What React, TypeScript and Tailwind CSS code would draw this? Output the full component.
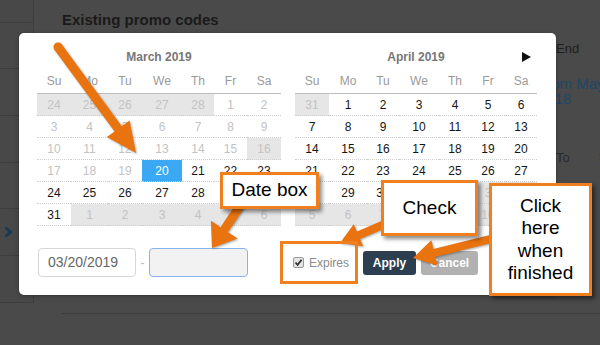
const FONT = { fontFamily: '"Liberation Sans", Arial, sans-serif' };

type Cell = [string, "o" | "d" | "n" | "s"];

// "24o 25o 1d" -> [["24","o"],["25","o"],["1","d"]]
const row = (s: string): Cell[] =>
  s.split(" ").map((t) => [t.slice(0, -1), t.slice(-1) as Cell[1]]);

const MARCH: Cell[][] = [
  row("24o 25o 26o 27o 28o 1d 2d"),
  row("3d 4d 5d 6d 7d 8d 9d"),
  row("10d 11d 12d 13d 14d 15d 16o"),
  row("17d 18d 19d 20s 21n 22n 23n"),
  row("24n 25n 26n 27n 28n 29n 30n"),
  row("31n 1o 2o 3o 4o 5o 6o"),
];

const APRIL: Cell[][] = [
  row("31o 1n 2n 3n 4n 5n 6n"),
  row("7n 8n 9n 10n 11n 12n 13n"),
  row("14n 15n 16n 17n 18n 19n 20n"),
  row("21n 22n 23n 24n 25n 26n 27n"),
  row("28n 29n 30n 1o 2o 3o 4o"),
  row("5o 6o 7o 8o 9o 10o 11o"),
];

const DAYS = ["Su", "Mo", "Tu", "We", "Th", "Fr", "Sa"];

const cellColors: Record<string, string> = {
  o: "bg-[#e6e6e6] text-[#c3c3c3]",
  d: "text-[#c3c3c3]",
  n: "text-[#151515]",
  s: "bg-[#3aa8f3] text-white",
};

function Calendar({ title, cols, rows, next }: { title: string; cols: string; rows: Cell[][]; next?: boolean }) {
  return (
    <div className="flex flex-col">
      <div className="grid grid-cols-[34px_1fr_34px] h-[24px] items-center">
        <span />
        <span className="text-center text-[12px] font-bold text-[#777]">{title}</span>
        <span className="flex justify-end pr-[6px]">
          {next && (
            <svg width="9" height="10" viewBox="0 0 9 10">
              <path d="M0 0 L9 5 L0 10 Z" fill="#111" />
            </svg>
          )}
        </span>
      </div>
      <div className={`grid ${cols} h-[25px] items-center border-b border-[#bdbdbd] text-[12px] text-[#9a9a9a]`}>
        {DAYS.map((d) => (
          <span key={d} className="text-center">{d}</span>
        ))}
      </div>
      {rows.map((r, i) => (
        <div key={i} className={`grid ${cols}`}>
          {r.map(([n, t], j) => (
            <div
              key={j}
              className={`h-[22px] flex items-center justify-center text-[12px] border-b border-dotted border-[#cfcfcf] ${cellColors[t]}`}
            >
              {n}
            </div>
          ))}
        </div>
      ))}
    </div>
  );
}

function arrow(x1: number, y1: number, x2: number, y2: number, shaft: number, headL: number, headW: number) {
  const len = Math.hypot(x2 - x1, y2 - y1);
  const ux = (x2 - x1) / len;
  const uy = (y2 - y1) / len;
  const nx = -uy;
  const ny = ux;
  const bx = x2 - ux * headL;
  const by = y2 - uy * headL;
  const p = (x: number, y: number) => `${x.toFixed(1)},${y.toFixed(1)}`;
  return [
    p(x1 + (nx * shaft) / 2, y1 + (ny * shaft) / 2),
    p(bx + (nx * shaft) / 2, by + (ny * shaft) / 2),
    p(bx + (nx * headW) / 2, by + (ny * headW) / 2),
    p(x2, y2),
    p(bx - (nx * headW) / 2, by - (ny * headW) / 2),
    p(bx - (nx * shaft) / 2, by - (ny * shaft) / 2),
    p(x1 - (nx * shaft) / 2, y1 - (ny * shaft) / 2),
  ].join(" ");
}

export default function App() {
  return (
    <div className="relative w-[600px] h-[345px] overflow-hidden bg-[#4a4a4a] flex" style={FONT}>
      {/* dimmed page behind the dialog */}
      <div className="w-[34px] flex flex-col border-r border-[#3e3e3e] self-start bg-[#484848]">
        <div className="h-[23px] border-b border-[#3e3e3e]" />
        <div className="h-[46px] border-b border-[#3e3e3e]" />
        <div className="h-[47px] border-b border-[#3e3e3e]" />
        <div className="h-[47px] border-b border-[#3e3e3e]" />
        <div className="h-[46px] border-b border-[#3e3e3e]" />
        <div className="h-[47px] border-b border-[#3e3e3e] flex items-center pl-[4px]">
          <svg width="9" height="12" viewBox="0 0 9 12">
            <path d="M1.5 1.5 L6.5 6 L1.5 10.5" fill="none" stroke="#163b57" strokeWidth="3" />
          </svg>
        </div>
        <div className="h-[47px] border-b border-[#3e3e3e]" />
      </div>
      <div className="flex-1 flex flex-col pl-[28px]">
        <div className="pt-[11px] h-[29px] leading-[18px] text-[15px] font-bold text-[#1a1a1a]">Existing promo codes</div>
        <div className="flex">
          <div className="flex-1" />
          <div className="w-[62px] flex flex-col whitespace-nowrap">
            <div className="mt-[12px] pl-[18px] h-[16px] leading-[16px] text-[13px] text-[#1e1e1e]">End</div>
            <div className="mt-[19px] pl-[4px] leading-[15px] text-[15px] text-[#1d4866]">from May</div>
            <div className="leading-[15px] text-[15px] text-[#1d4866]">2018</div>
            <div className="mt-[44px] pl-[18px] leading-[16px] text-[13px] text-[#2a2a2a] flex">
              <span>To</span>
              <span className="ml-[29px]">S</span>
            </div>
          </div>
        </div>
        <div className="mt-auto mb-[31px] border-t border-[#3b3b3b]" />
      </div>

      {/* date range dialog */}
      <div className="absolute left-[19px] top-[33px] w-[537px] bg-white rounded-[5px] pt-[12px] pb-[18px] pl-[18px] pr-[19px] shadow-[0_1px_4px_rgba(0,0,0,0.3)]">
        <div className="flex gap-[14px]">
          <div className="w-[244px]">
            <Calendar title="March 2019" cols="grid-cols-[34px_37px_34px_40px_32px_33px_34px]" rows={MARCH} />
          </div>
          <div className="w-[242px]">
            <Calendar title="April 2019" cols="grid-cols-[34px_38px_32px_40px_32px_34px_32px]" rows={APRIL} next />
          </div>
        </div>
        <div className="flex items-center mt-[22px] pl-[1px]">
          <div className="w-[98px] h-[29px] border border-[#d6d6d6] rounded-[4px] flex items-center pl-[9px] text-[14px] text-[#666]">
            03/20/2019
          </div>
          <span className="w-[13px] text-center text-[12px] text-[#bbb]">-</span>
          <div className="w-[99px] h-[29px] border border-[#86b3ee] rounded-[4px] bg-[#f2f2f2]" />
          <span className="ml-[45px] w-[11px] h-[11px] rounded-[2px] border border-[#9a9a9a] bg-[#e4e4e4] flex items-center justify-center">
            <svg width="9" height="9" viewBox="0 0 9 9">
              <path d="M1.5 4.5 L3.6 6.8 L7.6 1.8" fill="none" stroke="#333" strokeWidth="1.8" />
            </svg>
          </span>
          <span className="ml-[5px] text-[12px] text-[#8a8a8a]">Expires</span>
          <button className="ml-[14px] w-[53px] h-[24px] rounded-[3px] bg-[#2c3e50] text-white text-[12px] font-bold">Apply</button>
          <button className="ml-[5px] w-[57px] h-[24px] rounded-[3px] bg-[#b1b1b1] text-white text-[12px] font-bold">Cancel</button>
        </div>
      </div>

      {/* tutorial annotations */}
      <svg className="absolute inset-0 pointer-events-none drop-shadow-[1px_1px_1px_rgba(0,0,0,0.35)]" width="600" height="345">
        <circle cx="58" cy="47" r="4.5" fill="#e8730f" />
        <polygon points={arrow(58, 47, 136, 153, 9, 30, 28)} fill="#e8730f" />
        <polygon points={arrow(244, 200, 212, 248, 9, 22, 32)} fill="#e8730f" />
        <polygon points={arrow(392, 221, 340, 243, 8, 20, 24)} fill="#e8730f" />
        <polygon points={arrow(495, 238, 413, 258, 8, 22, 26)} fill="#e8730f" />
      </svg>
      <div className="absolute left-[280px] top-[241px] w-[78px] h-[43px] border-[3px] border-[#f0801f]" />
      <div className="absolute left-[220px] top-[172px] w-[99px] h-[37px] border-[3px] border-[#f0801f] bg-white shadow-[3px_3px_4px_rgba(0,0,0,0.45)] flex items-center justify-center text-[19px] text-black">
        Date box
      </div>
      <div className="absolute left-[381px] top-[180px] w-[97px] h-[56px] border-[3px] border-[#f0801f] bg-white shadow-[3px_3px_4px_rgba(0,0,0,0.45)] flex items-center justify-center text-[19px] text-black">
        Check
      </div>
      <div className="absolute left-[489px] top-[183px] w-[103px] h-[113px] border-[3px] border-[#f0801f] bg-white shadow-[3px_3px_4px_rgba(0,0,0,0.45)] flex items-center justify-center text-center text-[19px] leading-[22.5px] text-black">
        Click
        <br />
        here
        <br />
        when
        <br />
        finished
      </div>
    </div>
  );
}
